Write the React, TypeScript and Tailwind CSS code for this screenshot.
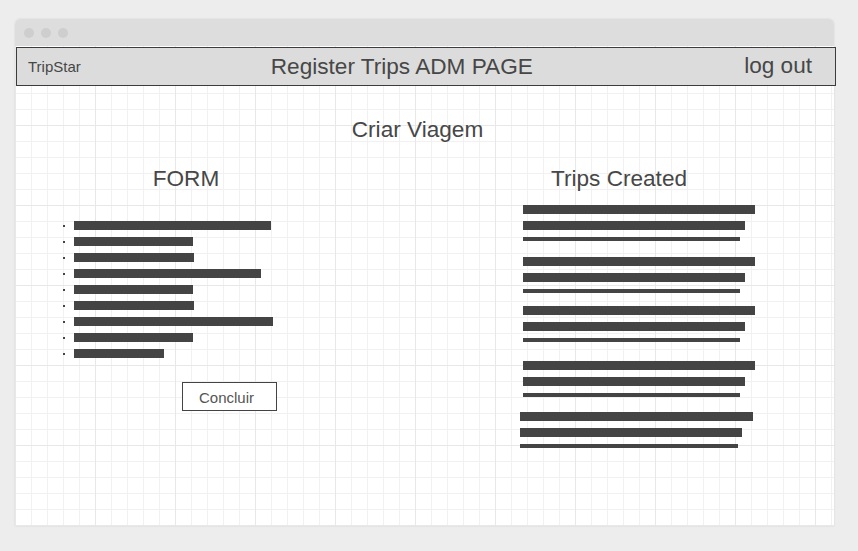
import React from "react";

const formBars = [197, 119, 120, 187, 119, 120, 199, 119, 90];

const tripGroups = [
  { mt: "mt-[14px]", pl: "pl-[23px]", widths: ["w-[232px]", "w-[222px]", "w-[217px]"] },
  { mt: "mt-[16px]", pl: "pl-[23px]", widths: ["w-[232px]", "w-[222px]", "w-[217px]"] },
  { mt: "mt-[13px]", pl: "pl-[23px]", widths: ["w-[232px]", "w-[222px]", "w-[217px]"] },
  { mt: "mt-[19px]", pl: "pl-[23px]", widths: ["w-[232px]", "w-[222px]", "w-[217px]"] },
  { mt: "mt-[15px]", pl: "pl-[20px]", widths: ["w-[233px]", "w-[222px]", "w-[218px]"] },
];

const App = () => {
  return (
    <div className="w-[858px] h-[551px] bg-[#ededed] pt-[19px] pl-[15px] font-['Liberation_Sans',Arial,sans-serif] text-[#474747]">
      {/* Browser window */}
      <div className="w-[819px] h-[507px] bg-white rounded-t-[5px] shadow-[0_0_2px_rgba(0,0,0,0.12)] flex flex-col">
        {/* Title bar */}
        <div className="h-[27px] bg-[#dddddd] rounded-t-[5px] flex items-center pl-[9px] gap-[7px]">
          <span className="w-[10px] h-[10px] rounded-full bg-[#cecece]" />
          <span className="w-[10px] h-[10px] rounded-full bg-[#cecece]" />
          <span className="w-[10px] h-[10px] rounded-full bg-[#cecece]" />
        </div>

        {/* Grid canvas */}
        <div className="flex-1 bg-[image:linear-gradient(to_right,#e8e8e8_1px,transparent_1px),linear-gradient(to_bottom,#e8e8e8_1px,transparent_1px),linear-gradient(to_right,#f1f1f1_1px,transparent_1px),linear-gradient(to_bottom,#f1f1f1_1px,transparent_1px)] bg-[size:80px_80px,80px_80px,16px_16px,16px_16px] bg-[position:0_-1px]">
          {/* Header */}
          <div className="mt-[1px] ml-[1px] w-[820px] h-[39px] bg-[#dcdcdc] border-[1.5px] border-[#3c3c3c] flex items-center">
            <span className="ml-[11px] text-[15px] leading-[17px]">TripStar</span>
            <span className="ml-[190px] text-[22.6px] leading-[25px]">Register Trips ADM PAGE</span>
            <span className="ml-auto mr-[23px] text-[22.6px] leading-[25px] -mt-[2px]">log out</span>
          </div>

          {/* Page title */}
          <div className="mt-[31px] pr-[14px] flex justify-center text-[22.6px] leading-[25px]">
            Criar Viagem
          </div>

          <div className="mt-[24px] flex">
            {/* Form column */}
            <div className="w-[342px] flex flex-col">
              <h2 className="text-center text-[22.6px] leading-[25px]">FORM</h2>
              <ul className="mt-[30px] pl-[48px] flex flex-col">
                {formBars.map((w, i) => (
                  <li key={i} className="h-[16px] flex items-start">
                    <div className="h-[9px] flex items-center gap-[9px]">
                      <span className="w-[2px] h-[2px] bg-[#444444]" />
                      <span className="h-[9px] bg-[#444444]" style={{ width: w }} />
                    </div>
                  </li>
                ))}
              </ul>
              <button className="mt-[17px] ml-[167px] w-[95px] h-[29px] border border-[#444444] bg-white flex items-center pl-[16px] pt-[2px] text-[15px] leading-[17px] text-[#555555]">
                Concluir
              </button>
            </div>

            {/* Trips column */}
            <div className="ml-[143px] w-[238px] flex flex-col">
              <h2 className="text-center text-[22.6px] leading-[25px]">Trips Created</h2>
              {tripGroups.map((g, i) => (
                <div key={i} className={`${g.mt} ${g.pl} flex flex-col`}>
                  <span className={`${g.widths[0]} h-[9px] bg-[#444444]`} />
                  <span className={`${g.widths[1]} mt-[7px] h-[9px] bg-[#444444]`} />
                  <span className={`${g.widths[2]} mt-[7px] h-[4px] bg-[#444444]`} />
                </div>
              ))}
            </div>
          </div>
        </div>
      </div>
    </div>
  );
};

export default App;
